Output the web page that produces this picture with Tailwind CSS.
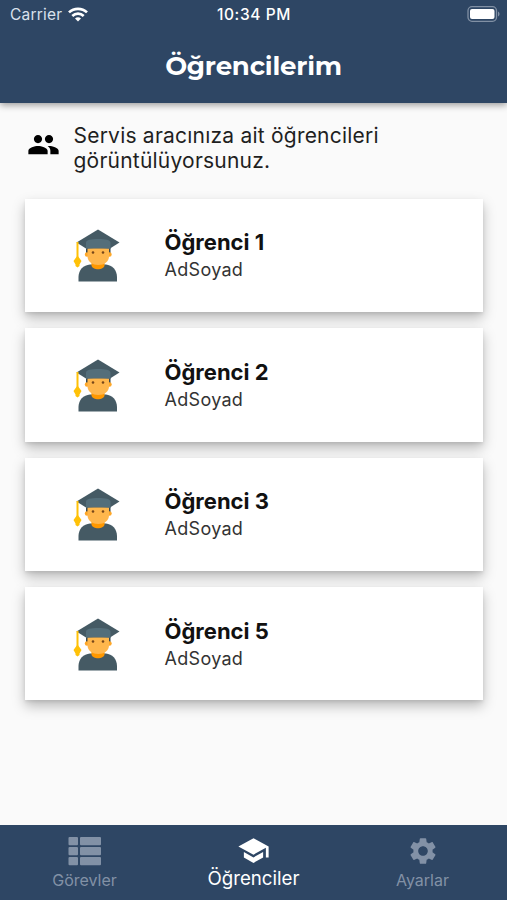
<!DOCTYPE html>
<html lang="tr">
<head>
  <meta charset="UTF-8">
  <meta name="viewport" content="width=device-width, initial-scale=1.0">
  <title>Öğrencilerim</title>
  <script src="https://cdn.jsdelivr.net/npm/@tailwindcss/browser@4"></script>
</head>
<body class="bg-[#fafafa] font-['Inter',sans-serif]">
  <div class="flex flex-col w-[507px] h-[900px] overflow-hidden">

    <!-- Header -->
    <header class="relative h-[103px] shrink-0 bg-[#2e4664] text-white shadow-[0_2px_7px_rgba(0,0,0,0.4)]">
      <div class="grid grid-cols-3 items-center h-[30px] pl-[10px] pr-[7px] text-[15.5px]">
        <div class="flex items-center gap-[6px] text-[#d9e1ec]">
          <span class="tracking-[0.2px]">Carrier</span>
          <svg class="w-5 h-[15px] -mt-px" viewBox="0 0 20 15" fill="none" stroke="#fff" stroke-width="2.7">
            <path d="M1 5.4C6 .6 14 .6 19 5.4"/>
            <path d="M4.3 9C7.6 5.9 12.4 5.9 15.7 9"/>
            <path d="M7 11.5C8.7 9.9 11.3 9.9 13 11.5L10 14.6Z" fill="#fff" stroke="none"/>
          </svg>
        </div>
        <span class="pr-[2px] text-center font-medium text-[15.5px] tracking-[0.6px] whitespace-nowrap">10:34 PM</span>
        <svg class="justify-self-end w-[33px] h-4 -mt-[2px]" viewBox="0 0 33 16">
          <rect x="1" y=".7" width="28.5" height="14.6" rx="4" fill="none" stroke="#8190a4" stroke-width="1.3"/>
          <rect x="3" y="3" width="24.5" height="10" rx="2" fill="#fff"/>
          <path d="M31 5.5c2 .8 2 4.2 0 5z" fill="#8190a4"/>
        </svg>
      </div>
      <h1 class="pt-[16px] text-center text-[26px] leading-10 font-bold tracking-[-0.2px] font-['Montserrat','Lato',sans-serif]">Öğrencilerim</h1>
    </header>

    <!-- Main Content -->
    <main class="flex-1 px-[25px] pt-[19.5px]">
      <div class="flex pl-[3px] text-[#1f1f1f]">
        <svg class="w-[33px] h-[33px] mt-[5.5px] -ml-px shrink-0" viewBox="0 0 24 24" fill="#000">
          <path d="M16 11c1.66 0 2.99-1.34 2.99-3S17.66 5 16 5c-1.66 0-3 1.34-3 3s1.34 3 3 3zm-8 0c1.66 0 2.99-1.34 2.99-3S9.66 5 8 5C6.34 5 5 6.34 5 8s1.34 3 3 3zm0 2c-2.33 0-7 1.17-7 3.5V19h14v-2.5c0-2.33-4.67-3.5-7-3.5zm8 0c-.29 0-.62.02-.97.05 1.16.84 1.97 1.97 1.97 3.45V19h6v-2.5c0-2.33-4.67-3.5-7-3.5z"/>
        </svg>
        <p class="ml-[13.5px] text-[21px] leading-[25.5px] tracking-[0.22px]">Servis aracınıza ait öğrencileri<br>görüntülüyorsunuz.</p>
      </div>
      <div class="mt-[25.4px] space-y-[16px]" id="studentList"></div>
    </main>

    <!-- Bottom Navigation -->
    <nav class="grid grid-cols-3 h-[75px] shrink-0 bg-[#2e4664] text-[#8291a6]">
      <div class="flex flex-col items-center pt-[10px]">
        <svg class="w-[33px] h-[33px]" viewBox="0 0 33 33" fill="currentColor">
          <rect x="0.5" y="2" width="9.5" height="8.2" rx="1"/><rect x="12" y="2" width="21" height="8.2" rx="1"/>
          <rect x="0.5" y="12" width="9.5" height="8.2" rx="1"/><rect x="12" y="12" width="21" height="8.2" rx="1"/>
          <rect x="0.5" y="22" width="9.5" height="8.2" rx="1"/><rect x="12" y="22" width="21" height="8.2" rx="1"/>
        </svg>
        <span class="text-[16px] leading-6">Görevler</span>
      </div>
      <div class="flex flex-col items-center pt-[9px] text-white">
        <svg class="w-[33px] h-[33px]" viewBox="0 0 24 24" fill="currentColor">
          <path d="M5 13.18v4L12 21l7-3.82v-4L12 17l-7-3.82zM12 3L1 9l11 6 9-4.91V17h2V9L12 3z"/>
        </svg>
        <span class="-mt-px text-[18.7px] leading-[26px]">Öğrenciler</span>
      </div>
      <div class="flex flex-col items-center pt-[10px]">
        <svg class="w-8 h-8" viewBox="0 0 24 24" fill="currentColor">
          <path d="M19.14 12.94c.04-.3.06-.61.06-.94 0-.32-.02-.64-.07-.94l2.03-1.58c.18-.14.23-.41.12-.61l-1.92-3.32c-.12-.22-.37-.29-.59-.22l-2.39.96c-.5-.38-1.03-.7-1.62-.94l-.36-2.54c-.04-.24-.24-.41-.48-.41h-3.84c-.24 0-.43.17-.47.41l-.36 2.54c-.59.24-1.13.57-1.62.94l-2.39-.96c-.22-.08-.47 0-.59.22L2.74 8.87c-.12.21-.08.47.12.61l2.03 1.58c-.05.3-.09.63-.09.94s.02.64.07.94l-2.03 1.58c-.18.14-.23.41-.12.61l1.92 3.32c.12.22.37.29.59.22l2.39-.96c.5.38 1.03.7 1.62.94l.36 2.54c.05.24.24.41.48.41h3.84c.24 0 .44-.17.47-.41l.36-2.54c.59-.24 1.13-.56 1.62-.94l2.39.96c.22.08.47 0 .59-.22l1.92-3.32c.12-.22.07-.47-.12-.61l-2.01-1.58zM12 15.6c-1.98 0-3.6-1.62-3.6-3.6s1.62-3.6 3.6-3.6 3.6 1.62 3.6 3.6-1.62 3.6-3.6 3.6z"/>
        </svg>
        <span class="mt-px text-[16px] leading-6">Ayarlar</span>
      </div>
    </nav>
  </div>

  <script>
    const students = [
      { title: 'Öğrenci 1', name: 'AdSoyad' },
      { title: 'Öğrenci 2', name: 'AdSoyad' },
      { title: 'Öğrenci 3', name: 'AdSoyad' },
      { title: 'Öğrenci 5', name: 'AdSoyad' }
    ];

    const studentList = document.getElementById('studentList');

    students.forEach((student) => {
      const card = document.createElement('div');
      card.className = 'flex h-[113.4px] w-[458px] bg-white pl-[48px] pt-[30.5px] shadow-[0_6px_12px_rgba(0,0,0,0.26),0_2px_3px_rgba(0,0,0,0.08)]';
      card.innerHTML = `
        <svg class="w-12 h-[53px] shrink-0" viewBox="0 0 48 53">
          <path d="M5.5 52.5V48c0-7 5-12 11.500-12.500h16c6 .5 11 5.500 11 12.500v4.500z" fill="#455a64"/>
          <path d="M18.500 32h13v4.500c-1 5-12 5-13 0z" fill="#ff9800"/>
          <path d="M13 16h24.500v8H13z" fill="#37474f"/>
          <circle cx="14" cy="25.500" r="2.200" fill="#ffa726"/>
          <circle cx="36.500" cy="25.500" r="2.200" fill="#ffa726"/>
          <path d="M14.500 17h21.500v10.500c0 5-5 8.500-10.700 8.500s-10.800-3.500-10.800-8.500z" fill="#ffb74d"/>
          <circle cx="20" cy="23.500" r="1.300" fill="#784719"/>
          <circle cx="30" cy="23.500" r="1.300" fill="#784719"/>
          <path d="M25 .5L46.500 13.500 37 19.500H13L3.500 13.500z" fill="#455a64"/>
          <path d="M13 20v-6.500c0-2.500 5-3.500 12.200-3.500s12.300 1 12.300 3.500V20c-2-.8-6-1-12.300-1s-10.200.2-12.200 1z" fill="#546e7a"/>
          <path d="M4.500 13v17" stroke="#ffc107" stroke-width="2"/>
          <path d="M4.500 26.500L8.500 32 6.500 35.500v1.500L4.500 38.500 2.500 37v-1.500L.5 32z" fill="#ffc107"/>
        </svg>
        <div class="ml-[43px] pl-[0.5px]">
          <h3 class="text-[22px] leading-[27px] font-bold text-[#111]">${student.title}</h3>
          <p class="text-[18px] leading-[27px] text-[#333] tracking-[0.3px]">${student.name}</p>
        </div>
      `;
      studentList.appendChild(card);
    });
  </script>
</body>
</html>
